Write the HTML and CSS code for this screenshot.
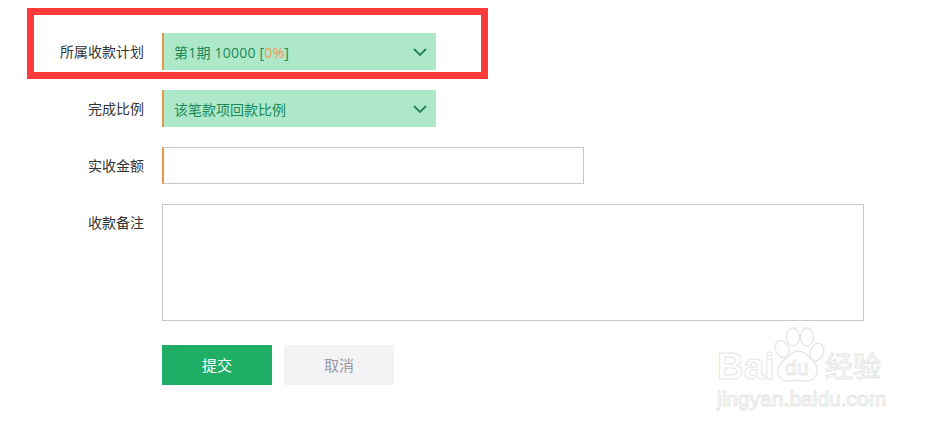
FILE: index.html
```html
<!DOCTYPE html>
<html lang="zh-CN">
<head>
  <meta charset="UTF-8" />
  <title>收款</title>
  <link rel="stylesheet" href="styles.css">
</head>
<body>
  <form class="pay-form">
    <div class="form-row">
      <label class="form-label">所属收款计划</label>
      <div class="fake-select">
        <span class="plan-text">第1期 10000 [<em class="percent">0%</em>]</span>
        <svg class="arrow" width="14" height="8" viewBox="0 0 14 8"><path d="M1 1l6 6 6-6" fill="none" stroke="#23805a" stroke-width="1.8"/></svg>
      </div>
    </div>
    <div class="form-row">
      <label class="form-label">完成比例</label>
      <div class="fake-select">
        <span>该笔款项回款比例</span>
        <svg class="arrow" width="14" height="8" viewBox="0 0 14 8"><path d="M1 1l6 6 6-6" fill="none" stroke="#23805a" stroke-width="1.8"/></svg>
      </div>
    </div>
    <div class="form-row">
      <label class="form-label">实收金额</label>
      <input class="text-input" type="text">
    </div>
    <div class="form-row form-row-top">
      <label class="form-label">收款备注</label>
      <textarea class="note-input"></textarea>
    </div>
    <div class="form-actions">
      <button class="btn btn-submit" type="button">提交</button>
      <button class="btn btn-cancel" type="button">取消</button>
    </div>
  </form>

  <div class="red-box"></div>

  <div class="watermark">
    <div class="wm-top">
      <span class="wm-latin">Bai</span>
      <svg class="wm-paw" width="52" height="56" viewBox="0 0 52 56">
        <g fill="#fff" stroke="#e6e6e6" stroke-width="1.4">
          <ellipse cx="9" cy="22" rx="6.5" ry="9" transform="rotate(-25 9 22)"/>
          <ellipse cx="20" cy="10" rx="6.5" ry="9"/>
          <ellipse cx="34" cy="10" rx="6.5" ry="9"/>
          <ellipse cx="44" cy="25" rx="6.5" ry="9" transform="rotate(20 44 25)"/>
          <path d="M25 24c7 0 11 6 16 11 6 7 3 19-7 19-4 0-6-1-9-1s-6 1-10 1c-10 0-13-11-7-18 6-5 10-12 17-12z"/>
        </g>
      </svg>
      <span class="wm-du">du</span>
      <span class="wm-cn">经验</span>
    </div>
    <div class="wm-url">jingyan.baidu.com</div>
  </div>
</body>
</html>
```

FILE: styles.css
```css
* {
  box-sizing: border-box;
}

body {
  margin: 0;
  background: #fff;
  font-family: "Open Sans", "Noto Sans CJK SC", sans-serif;
  font-size: 14px;
  color: #333;
  height: 428px;
  overflow: hidden;
  position: relative;
}

.pay-form {
  padding-top: 33px;
  display: flex;
  flex-direction: column;
  gap: 20px;
}

.form-row {
  display: flex;
  align-items: center;
  gap: 18px;
}

.form-row-top {
  align-items: flex-start;
}

.form-label {
  width: 144px;
  text-align: right;
  line-height: 37px;
}

.fake-select {
  width: 274px;
  height: 37px;
  background: #ade8c9;
  border-left: 2px solid #e8964a;
  padding: 0 9px 0 10px;
  display: flex;
  align-items: center;
  justify-content: space-between;
  color: #1b8a5a;
}

.plan-text {
  letter-spacing: 0.22px;
}

.percent {
  font-style: normal;
  color: #ee9a55;
}

.text-input {
  width: 422px;
  height: 37px;
  border: 1px solid #c8c8c8;
  border-left: 2px solid #e8964a;
  outline: none;
}

.note-input {
  width: 702px;
  height: 117px;
  border: 1px solid #c8c8c8;
  outline: none;
  resize: none;
  display: block;
}

.form-actions {
  display: flex;
  gap: 12px;
  padding: 4px 0 0 162px;
}

.btn {
  width: 110px;
  height: 40px;
  border: none;
  padding: 0 0 1px;
  font-family: inherit;
  font-size: 15px;
}

.btn-submit {
  background: #20ae67;
  color: #fff;
}

.btn-cancel {
  background: #f3f3f6;
  color: #9a9aa8;
}

.red-box {
  position: absolute;
  left: 27px;
  top: 8px;
  width: 461px;
  height: 71px;
  border: 7px solid #ff3a3a;
}

.watermark {
  position: absolute;
  left: 717px;
  top: 327px;
  width: 175px;
  color: #fff;
}

.wm-top {
  display: flex;
  align-items: flex-start;
  height: 60px;
  position: relative;
}

.wm-latin,
.wm-du,
.wm-cn,
.wm-url {
  -webkit-text-stroke: 1px #e6e6e6;
  font-family: "Liberation Sans", sans-serif;
}

.wm-latin {
  width: 56px;
  font-size: 37px;
  font-weight: bold;
  line-height: 37px;
  margin-top: 21px;
}

.wm-du {
  position: absolute;
  left: 68px;
  top: 30px;
  font-size: 21px;
  line-height: 21px;
}

.wm-cn {
  font-family: "Noto Sans CJK SC", sans-serif;
  font-size: 28px;
  line-height: 30px;
  margin-top: 23px;
  white-space: nowrap;
}

.wm-url {
  font-size: 21px;
  line-height: 24px;
  white-space: nowrap;
}
```
